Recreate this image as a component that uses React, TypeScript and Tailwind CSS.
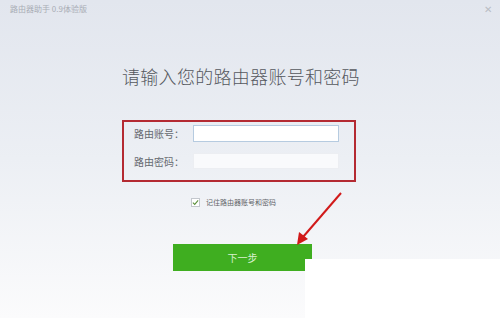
export default function App() {
  const font = { fontFamily: '"Noto Sans CJK SC", "Noto Sans", sans-serif' };
  return (
    <div
      className="relative w-[500px] h-[318px] overflow-hidden bg-gradient-to-b from-[#e2e6ee] via-[#eceff4] to-[#fbfbfc]"
      style={font}
    >
      {/* title bar */}
      <div className="h-[33px] flex items-start justify-between px-[10px] pt-[3px]">
        <span className="text-[8px] leading-[12px] text-[#a9adb5]">路由器助手 0.9体验版</span>
        <span className="text-[10px] leading-[12px] text-[#b9bdc4] mr-[-2px]">✕</span>
      </div>

      <div className="ml-[122px] w-[240px] flex flex-col">
        <h1 className="mt-[29px] text-[18px] leading-[28px] tracking-[0.3px] font-light text-[#55585e] whitespace-nowrap">
          请输入您的路由器账号和密码
        </h1>

        <div className="mt-[30px] w-[234px] h-[62px] border-2 border-[#b42a32] flex flex-col gap-[11px] pl-[10px] pt-[3px]">
          <div className="flex items-center">
            <span className="w-[59px] text-[10px] text-[#666a70]">路由账号：</span>
            <div className="w-[146px] h-[17px] bg-white border border-[#b6cbe0]" />
          </div>
          <div className="flex items-center">
            <span className="w-[59px] text-[10px] text-[#666a70]">路由密码：</span>
            <div className="w-[146px] h-[16px] bg-[#f9fafc] border border-[#eceef2]" />
          </div>
        </div>

        <div className="mt-[15px] ml-[69px] flex items-center gap-[6px]">
          <div className="w-[9px] h-[9px] bg-white border border-[#c3c7cd] flex items-center justify-center">
            <svg width="7" height="7" viewBox="0 0 8 8">
              <path d="M1 4.2 L3.1 6.2 L7 1.6" stroke="#5a8f3a" strokeWidth="1.2" fill="none" />
            </svg>
          </div>
          <span className="text-[7px] leading-[10px] text-[#5f6368] whitespace-nowrap">记住路由器账号和密码</span>
        </div>

        <button className="mt-[37px] ml-[51px] w-[139px] h-[27px] bg-[#3fae20] text-[10px] text-[#d9f1cf] flex items-center justify-center">
          下一步
        </button>
      </div>

      {/* white patch over lower right */}
      <div className="absolute left-[305px] top-[259px] w-[195px] h-[59px] bg-white" />

      {/* red arrow */}
      <svg className="absolute left-0 top-0" width="500" height="318" viewBox="0 0 500 318">
        <line x1="341" y1="193" x2="303" y2="237" stroke="#d11a1a" strokeWidth="2" />
        <polygon points="297,245 299,232 308,239" fill="#d11a1a" />
      </svg>
    </div>
  );
}
